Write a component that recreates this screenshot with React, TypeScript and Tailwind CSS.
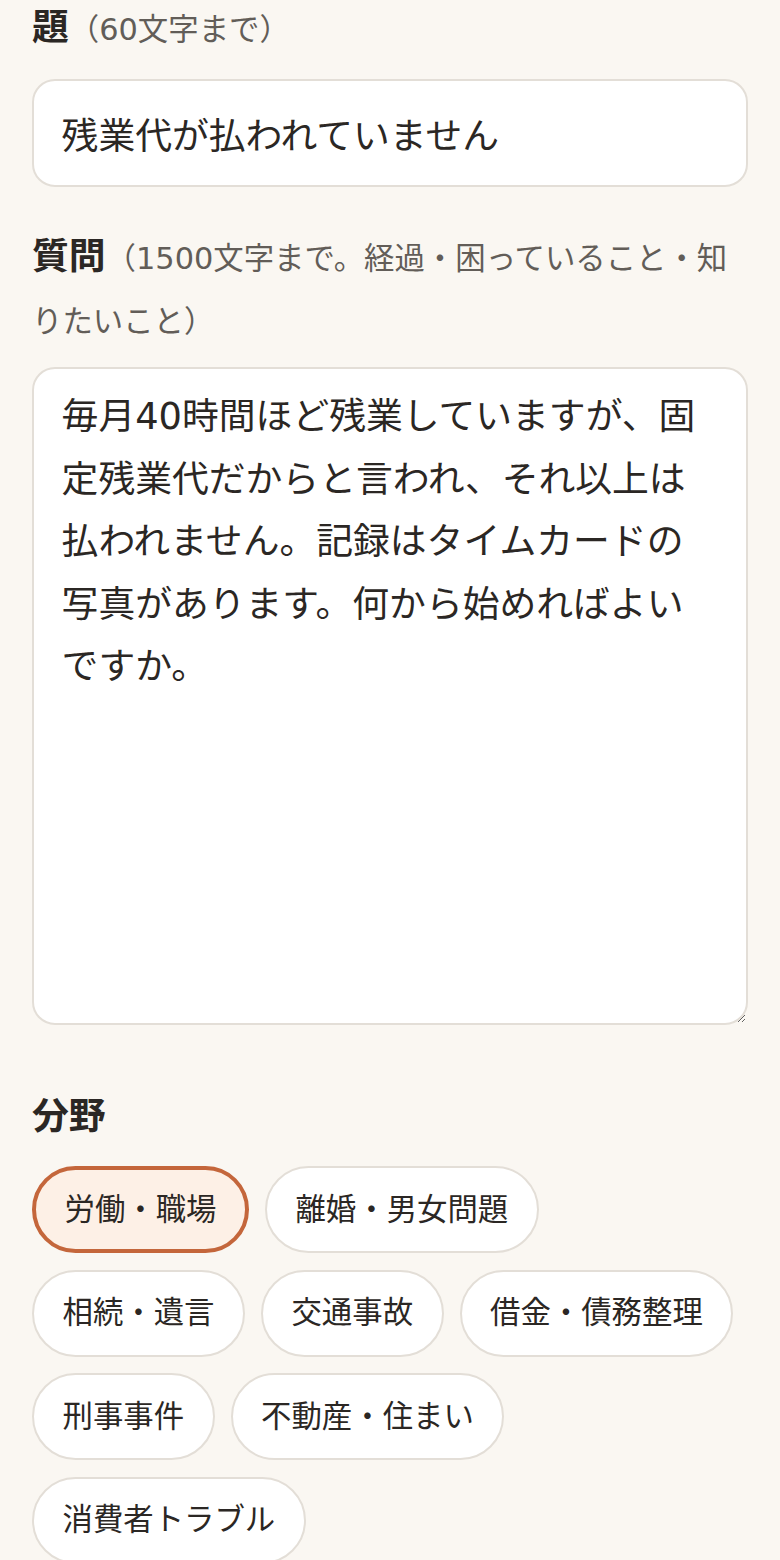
import React, { useState } from 'react';

const FIELDS = [
  '労働・職場',
  '離婚・男女問題',
  '相続・遺言',
  '交通事故',
  '借金・債務整理',
  '刑事事件',
  '不動産・住まい',
  '消費者トラブル',
];

const font = "font-['DejaVu_Sans','Noto_Sans_CJK_JP',sans-serif]";

const App: React.FC = () => {
  const [title, setTitle] = useState('残業代が払われていません');
  const [body, setBody] = useState(
    '毎月40時間ほど残業していますが、固定残業代だからと言われ、それ以上は払われません。記録はタイムカードの写真があります。何から始めればよいですか。'
  );
  const [field, setField] = useState('労働・職場');

  return (
    <div className={`min-h-[1560px] bg-[#faf7f2] px-8 pb-10 text-[#2b2724] ${font}`}>
      <label className="-mt-[3px] block text-[36.8px] leading-[62.5px]">
        <span className="font-bold">題</span>
        <span className="text-[30.4px] leading-none text-[#625d58]">（60文字まで）</span>
      </label>
      <input
        value={title}
        onChange={(e) => setTitle(e.target.value)}
        className={`mt-[19.5px] block h-[108px] w-full rounded-[23px] border-[2.3px] border-[#e3ded7] bg-white px-[27.6px] text-[36.8px] text-[#2b2724] outline-none ${font}`}
      />

      <label className="mt-[39px] block text-[36.8px] leading-[62.5px]">
        <span className="font-bold">質問</span>
        <span className="text-[30.4px] leading-none text-[#625d58]">（1500文字まで。経過・困っていること・知りたいこと）</span>
      </label>
      <textarea
        value={body}
        onChange={(e) => setBody(e.target.value)}
        className={`mt-[16px] block h-[658px] w-full rounded-[23px] border-[2.3px] border-[#e3ded7] bg-white px-[27.6px] py-[17px] text-[36.8px] leading-[62.5px] text-[#2b2724] outline-none ${font}`}
      />

      <div className="mt-[61px] text-[36.8px] font-bold leading-[62.5px]">分野</div>
      <div className="mt-[17.5px] flex flex-wrap gap-x-[16px] gap-y-[16.5px]">
        {FIELDS.map((f) => {
          const active = f === field;
          return (
            <button
              key={f}
              onClick={() => setField(f)}
              className={
                active
                  ? 'flex h-[87px] items-center rounded-full border-[4.6px] border-[#c4663b] bg-[#fdf0e6] px-[28.5px] text-[30.4px] text-[#2b2724]'
                  : 'flex h-[87px] items-center rounded-full border-[2.3px] border-[#e3ded7] bg-white px-[28.5px] text-[30.4px] text-[#2b2724]'
              }
            >
              {f}
            </button>
          );
        })}
      </div>
    </div>
  );
};

export default App;
